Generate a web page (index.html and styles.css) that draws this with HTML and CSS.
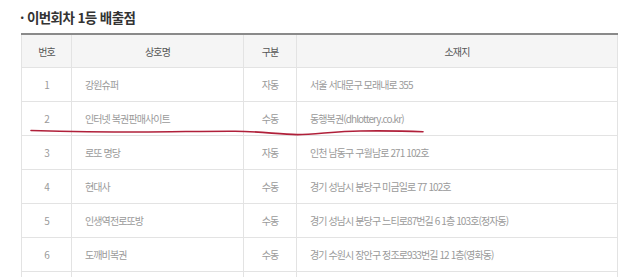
FILE: index.html
```html
<!DOCTYPE html>
<html lang="ko">
<head>
<meta charset="utf-8">
<link rel="stylesheet" href="styles.css">
</head>
<body>
<div class="page">
  <h3 class="title">· 이번회차 1등 배출점</h3>
  <div class="table-wrap">
    <table class="shops">
      <colgroup>
        <col class="c-no"><col class="c-name"><col class="c-type"><col class="c-addr">
      </colgroup>
      <thead>
        <tr><th>번호</th><th>상호명</th><th>구분</th><th>소재지</th></tr>
      </thead>
      <tbody>
        <tr><td class="ctr">1</td><td>강원슈퍼</td><td class="ctr">자동</td><td>서울 서대문구 모래내로 355</td></tr>
        <tr><td class="ctr">2</td><td>인터넷 복권판매사이트</td><td class="ctr">수동</td><td>동행복권(dhlottery.co.kr)</td></tr>
        <tr><td class="ctr">3</td><td>로또 명당</td><td class="ctr">자동</td><td>인천 남동구 구월남로 271 102호</td></tr>
        <tr><td class="ctr">4</td><td>현대사</td><td class="ctr">수동</td><td>경기 성남시 분당구 미금일로 77 102호</td></tr>
        <tr><td class="ctr">5</td><td>인생역전로또방</td><td class="ctr">수동</td><td>경기 성남시 분당구 느티로87번길 6 1층 103호(정자동)</td></tr>
        <tr><td class="ctr">6</td><td>도깨비복권</td><td class="ctr">수동</td><td>경기 수원시 장안구 정조로933번길 12 1층(영화동)</td></tr>
        <tr><td class="ctr"></td><td></td><td class="ctr"></td><td></td></tr>
      </tbody>
    </table>
    <svg class="scribble" width="640" height="20" viewBox="0 0 640 20">
      <path d="M31 10.5 C 70 11.5, 110 12, 140 12 S 210 11, 235 11.2 S 280 14.5, 297 14.6 S 335 11.3, 360 11 S 405 11, 423 11.8" fill="none" stroke="#b0203a" stroke-width="1.6" stroke-linecap="round"/>
    </svg>
  </div>
</div>
</body>
</html>
```
FILE: styles.css
```css
html, body {
  margin: 0;
  padding: 0;
  background: #fff;
}
body {
  font-family: "Noto Sans CJK KR", "Noto Sans", sans-serif;
  width: 640px;
  height: 277px;
  overflow: hidden;
}
.page {
  padding: 8px 0 0 20px;
}
.title {
  margin: 0;
  height: 25px;
  font-size: 13.5px;
  line-height: 19px;
  font-weight: 700;
  color: #333;
  letter-spacing: -0.6px;
}
.table-wrap {
  position: relative;
}
.shops {
  margin-left: 1px;
  width: 596px;
  border-collapse: collapse;
  table-layout: fixed;
  border-top: 2px solid #8a8a8a;
}
.c-no { width: 50px; }
.c-name { width: 172px; }
.c-type { width: 53px; }
.c-addr { width: 321px; }
.shops th,
.shops td {
  height: 33px;
  padding: 0 0 0 13px;
  border: 1px solid #e3e3e3;
  font-size: 10px;
  letter-spacing: -0.9px;
  white-space: nowrap;
  overflow: hidden;
  text-align: left;
  color: #9a9a9a;
  font-weight: 400;
}
.shops th {
  background: #f5f5f5;
  color: #555;
  text-align: center;
  padding: 0;
  height: 32px;
}
.shops td.ctr {
  text-align: center;
  padding: 0;
}
.scribble {
  position: absolute;
  left: -20px;
  top: 87px;
  pointer-events: none;
}
```
